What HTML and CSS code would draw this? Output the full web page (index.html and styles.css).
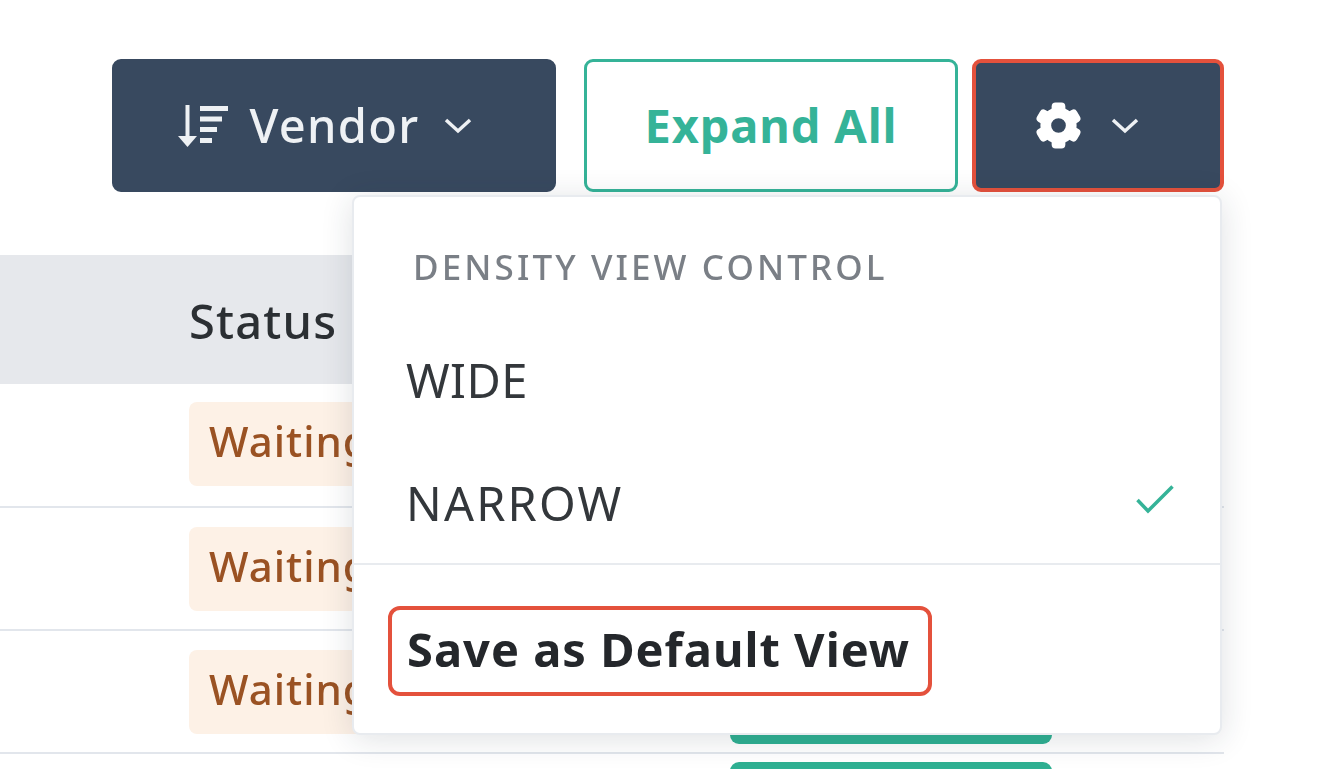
FILE: index.html
```html
<!DOCTYPE html>
<html lang="en">
<head>
<meta charset="utf-8">
<title>Density view control</title>
<link rel="stylesheet" href="styles.css">
</head>
<body>
<main class="page">
  <div class="toolbar">
    <button class="btn btn-dark btn-vendor">
      <svg class="icon-sort" viewBox="0 0 52 42"><path d="M7.500 0h4v32h-4z"/><path d="M0 31h19l-9.500 11z"/><path d="M22 1h28v5H22zM22 11.500h22v5H22zM22 22h17v5H22zM22 33h12v5H22z"/></svg>
      <span>Vendor</span>
      <svg class="icon-chev" viewBox="0 0 28 16"><path d="M2 2l12 11L26 2"/></svg>
    </button>
    <button class="btn btn-outline">Expand All</button>
    <button class="btn btn-dark btn-gear">
      <svg class="icon-gear" viewBox="0 0 48 48">
        <g class="gear-teeth">
          <rect x="17" y="0.500" width="14" height="47" rx="4"/>
          <rect x="17" y="0.500" width="14" height="47" rx="4" transform="rotate(60 24 24)"/>
          <rect x="17" y="0.500" width="14" height="47" rx="4" transform="rotate(120 24 24)"/>
        </g>
        <circle class="gear-ring" cx="24" cy="24" r="13"/>
      </svg>
      <svg class="icon-chev" viewBox="0 0 28 16"><path d="M2 2l12 11L26 2"/></svg>
    </button>
  </div>

  <div class="table">
    <div class="thead">Status</div>
    <div class="row"><span class="pill-wait">Waiting for Approval</span><span class="pill-green"></span></div>
    <div class="row"><span class="pill-wait">Waiting for Approval</span><span class="pill-green"></span></div>
    <div class="row"><span class="pill-wait">Waiting for Approval</span><span class="pill-green"></span></div>
    <div class="row"><span class="pill-wait">Waiting for Approval</span><span class="pill-green"></span></div>
  </div>

  <div class="menu">
    <div class="menu-title">DENSITY VIEW CONTROL</div>
    <div class="menu-item menu-wide">WIDE</div>
    <div class="menu-item menu-narrow">NARROW
      <svg class="icon-check" viewBox="0 0 38 30"><path d="M1.500 16L12 27 36.500 2.500"/></svg>
    </div>
    <div class="menu-foot"><span class="save-view">Save as Default View</span></div>
  </div>
</main>
</body>
</html>
```
FILE: styles.css
```css
* { box-sizing: border-box; }
html, body { margin: 0; height: 100%; background: #fff; overflow: hidden; }
body { font-family: "Noto Sans", "Open Sans", sans-serif; color: #24272b; }
.page { position: relative; width: 1339px; height: 769px; overflow: hidden; padding: 59px 115px 0 0; filter: blur(0.6px); }

.toolbar { display: flex; justify-content: flex-end; height: 133px; }
.btn { font-family: inherit; font-size: 47px; line-height: 1; height: 133px; border-radius: 9px; display: flex; align-items: center; justify-content: center; padding: 0; }
.btn-dark { background: #38495f; color: #eef1f4; border: 2px solid #38495f; }
.btn-vendor { width: 444px; margin-right: 28px; padding-right: 18px; font-weight: 500; letter-spacing: 1.300px; }
.btn-vendor span { margin: 0 25px 0 20px; }
.btn-outline { width: 374px; margin-right: 14px; background: #fff; border: 3px solid #35b398; color: #35b398; font-weight: 700; letter-spacing: .850px; }
.btn-gear { width: 252px; border: 4px solid #e4513c; padding-right: 22px; }

.icon-sort { width: 52px; height: 42px; fill: #eef1f4; }
.icon-chev { width: 28px; height: 16px; fill: none; stroke: #eef1f4; stroke-width: 3.500; }
.icon-gear { width: 47px; height: 47px; margin-right: 29px; }
.gear-teeth { fill: #fff; }
.gear-ring { fill: #38495f; stroke: #fff; stroke-width: 11; }

.table { margin-top: 63px; }
.thead { height: 129px; margin-right: 2px; padding-left: 189px; background: #e6e8ec; font-size: 47px; font-weight: 500; letter-spacing: 1.200px; line-height: 133px; color: #2b2f33; }
.row { display: grid; grid-template-columns: 541px 322px; height: 123px; padding-left: 189px; border-bottom: 2px solid #e2e6ec; }
.thead + .row { height: 124px; }
.pill-wait { align-self: start; margin-top: 19px; height: 84px; width: 400px; padding-left: 20px; border-radius: 8px; background: #fdf1e6; color: #9a5223; font-size: 42px; font-weight: 500; letter-spacing: 1px; line-height: 78px; white-space: nowrap; }
.thead + .row .pill-wait { margin-top: 18px; }
.pill-green { margin-top: 8px; height: 105px; border-radius: 9px; background: #2fb092; }

.menu { position: absolute; left: 352px; top: 195px; width: 870px; height: 540px; background: #fff; border: 2px solid #e8ebef; border-radius: 8px; box-shadow: 0 4px 32px rgba(30, 40, 60, .14); }
.menu-title { padding: 48px 0 0 59px; height: 122px; font-size: 35px; font-weight: 500; line-height: 44px; letter-spacing: 3.100px; color: #7a7f86; }
.menu-item { display: flex; justify-content: space-between; align-items: center; height: 121px; padding: 0 46px 0 52px; font-size: 47px; color: #33373b; }
.menu-wide { letter-spacing: .400px; }
.menu-narrow { padding-top: 4px; letter-spacing: 2.200px; }
.menu-foot { border-top: 2px solid #e8ebef; margin-top: 2px; padding: 41px 0 0 34px; }
.save-view { display: inline-block; height: 90px; width: 544px; padding-left: 15px; border: 4px solid #e4513c; border-radius: 12px; font-size: 47px; font-weight: 700; letter-spacing: 1px; line-height: 78px; color: #24272b; white-space: nowrap; }
.icon-check { width: 38px; height: 30px; margin-bottom: 8px; fill: none; stroke: #35b398; stroke-width: 3.500; }
```
